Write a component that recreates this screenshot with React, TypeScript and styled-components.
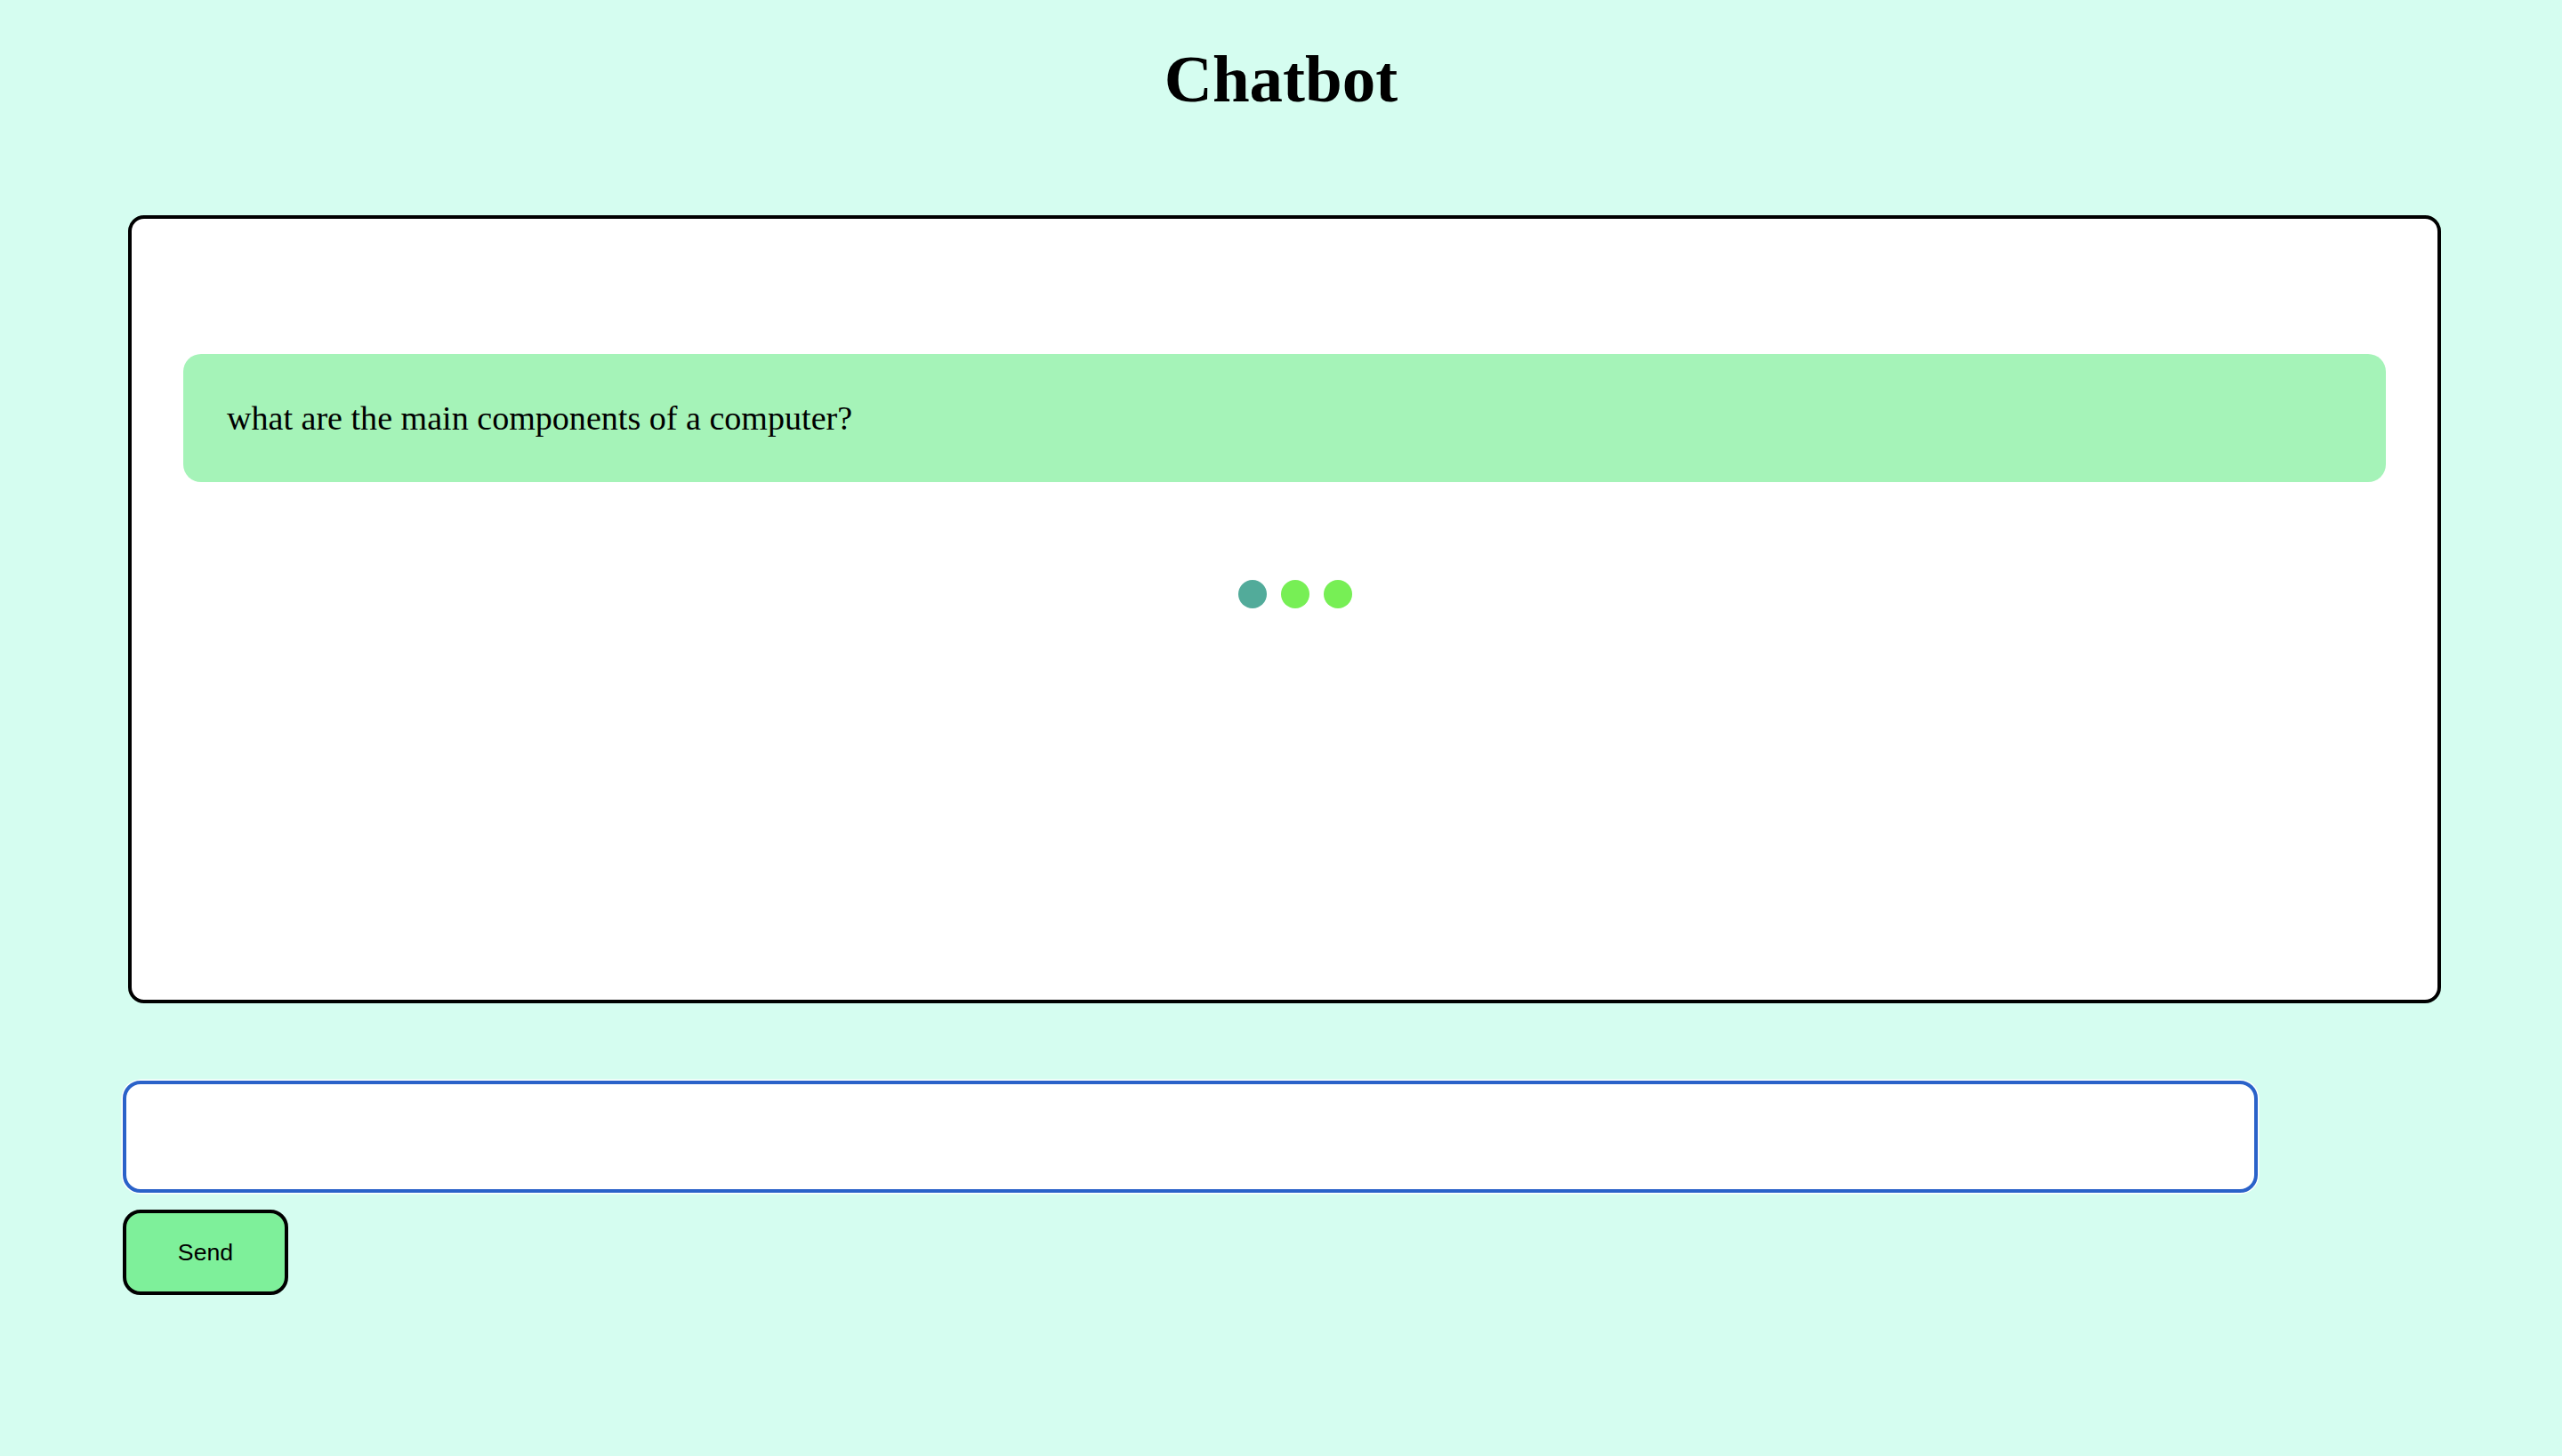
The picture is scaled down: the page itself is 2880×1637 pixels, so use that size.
import { createGlobalStyle, styled } from "styled-components";

const GlobalStyle = createGlobalStyle`
  html, body {
    margin: 0;
    padding: 0;
    background: #d5fdf0;
  }
  body {
    font-family: "Liberation Serif", "Times New Roman", serif;
    min-height: 1637px;
  }
`;

const Page = styled.div`
  display: flex;
  flex-direction: column;
`;

const Title = styled.h1`
  margin: 46px 0 0;
  text-align: center;
  font-size: 75px;
  font-weight: 700;
  line-height: 86px;
  color: #000;
`;

const ChatBox = styled.div`
  box-sizing: border-box;
  margin: 110px 0 0 144px;
  width: 2600px;
  height: 886px;
  padding: 152px 58px;
  background: #fff;
  border: 4px solid #000;
  border-radius: 18px;
  display: flex;
  flex-direction: column;
`;

const Bubble = styled.div`
  box-sizing: border-box;
  height: 144px;
  padding: 0 50px 0 49px;
  display: flex;
  align-items: center;
  background: #a5f3b8;
  border-radius: 20px;
  font-size: 38.1px;
  color: #000;
`;

const Typing = styled.div`
  display: flex;
  justify-content: center;
  gap: 16px;
  margin-top: 110px;
  padding-left: 24px;
`;

const Dot = styled.span<{ $color: string }>`
  width: 32px;
  height: 32px;
  border-radius: 50%;
  background: ${(p) => p.$color};
`;

const Composer = styled.div`
  display: flex;
  flex-direction: column;
  align-items: flex-start;
  gap: 19px;
  margin: 87px 0 0 138px;
`;

const Input = styled.input`
  box-sizing: border-box;
  width: 2400px;
  height: 126px;
  border: 4px solid #2a62c9;
  border-radius: 20px;
  background: #fff;
  box-shadow: 0 0 0 1.5px #fff;
  outline: none;
  padding: 0 24px;
  font-size: 32px;
`;

const SendButton = styled.button`
  box-sizing: border-box;
  width: 186px;
  height: 96px;
  border: 4px solid #000;
  border-radius: 20px;
  background: #7ef09a;
  color: #000;
  font-family: "Liberation Sans", Arial, sans-serif;
  font-size: 26.67px;
  cursor: pointer;
`;

export default function App() {
  return (
    <Page>
      <GlobalStyle />
      <Title>Chatbot</Title>
      <ChatBox>
        <Bubble>what are the main components of a computer?</Bubble>
        <Typing>
          <Dot $color="#52ab9a" />
          <Dot $color="#77ef55" />
          <Dot $color="#77ef55" />
        </Typing>
      </ChatBox>
      <Composer>
        <Input type="text" />
        <SendButton>Send</SendButton>
      </Composer>
    </Page>
  );
}
